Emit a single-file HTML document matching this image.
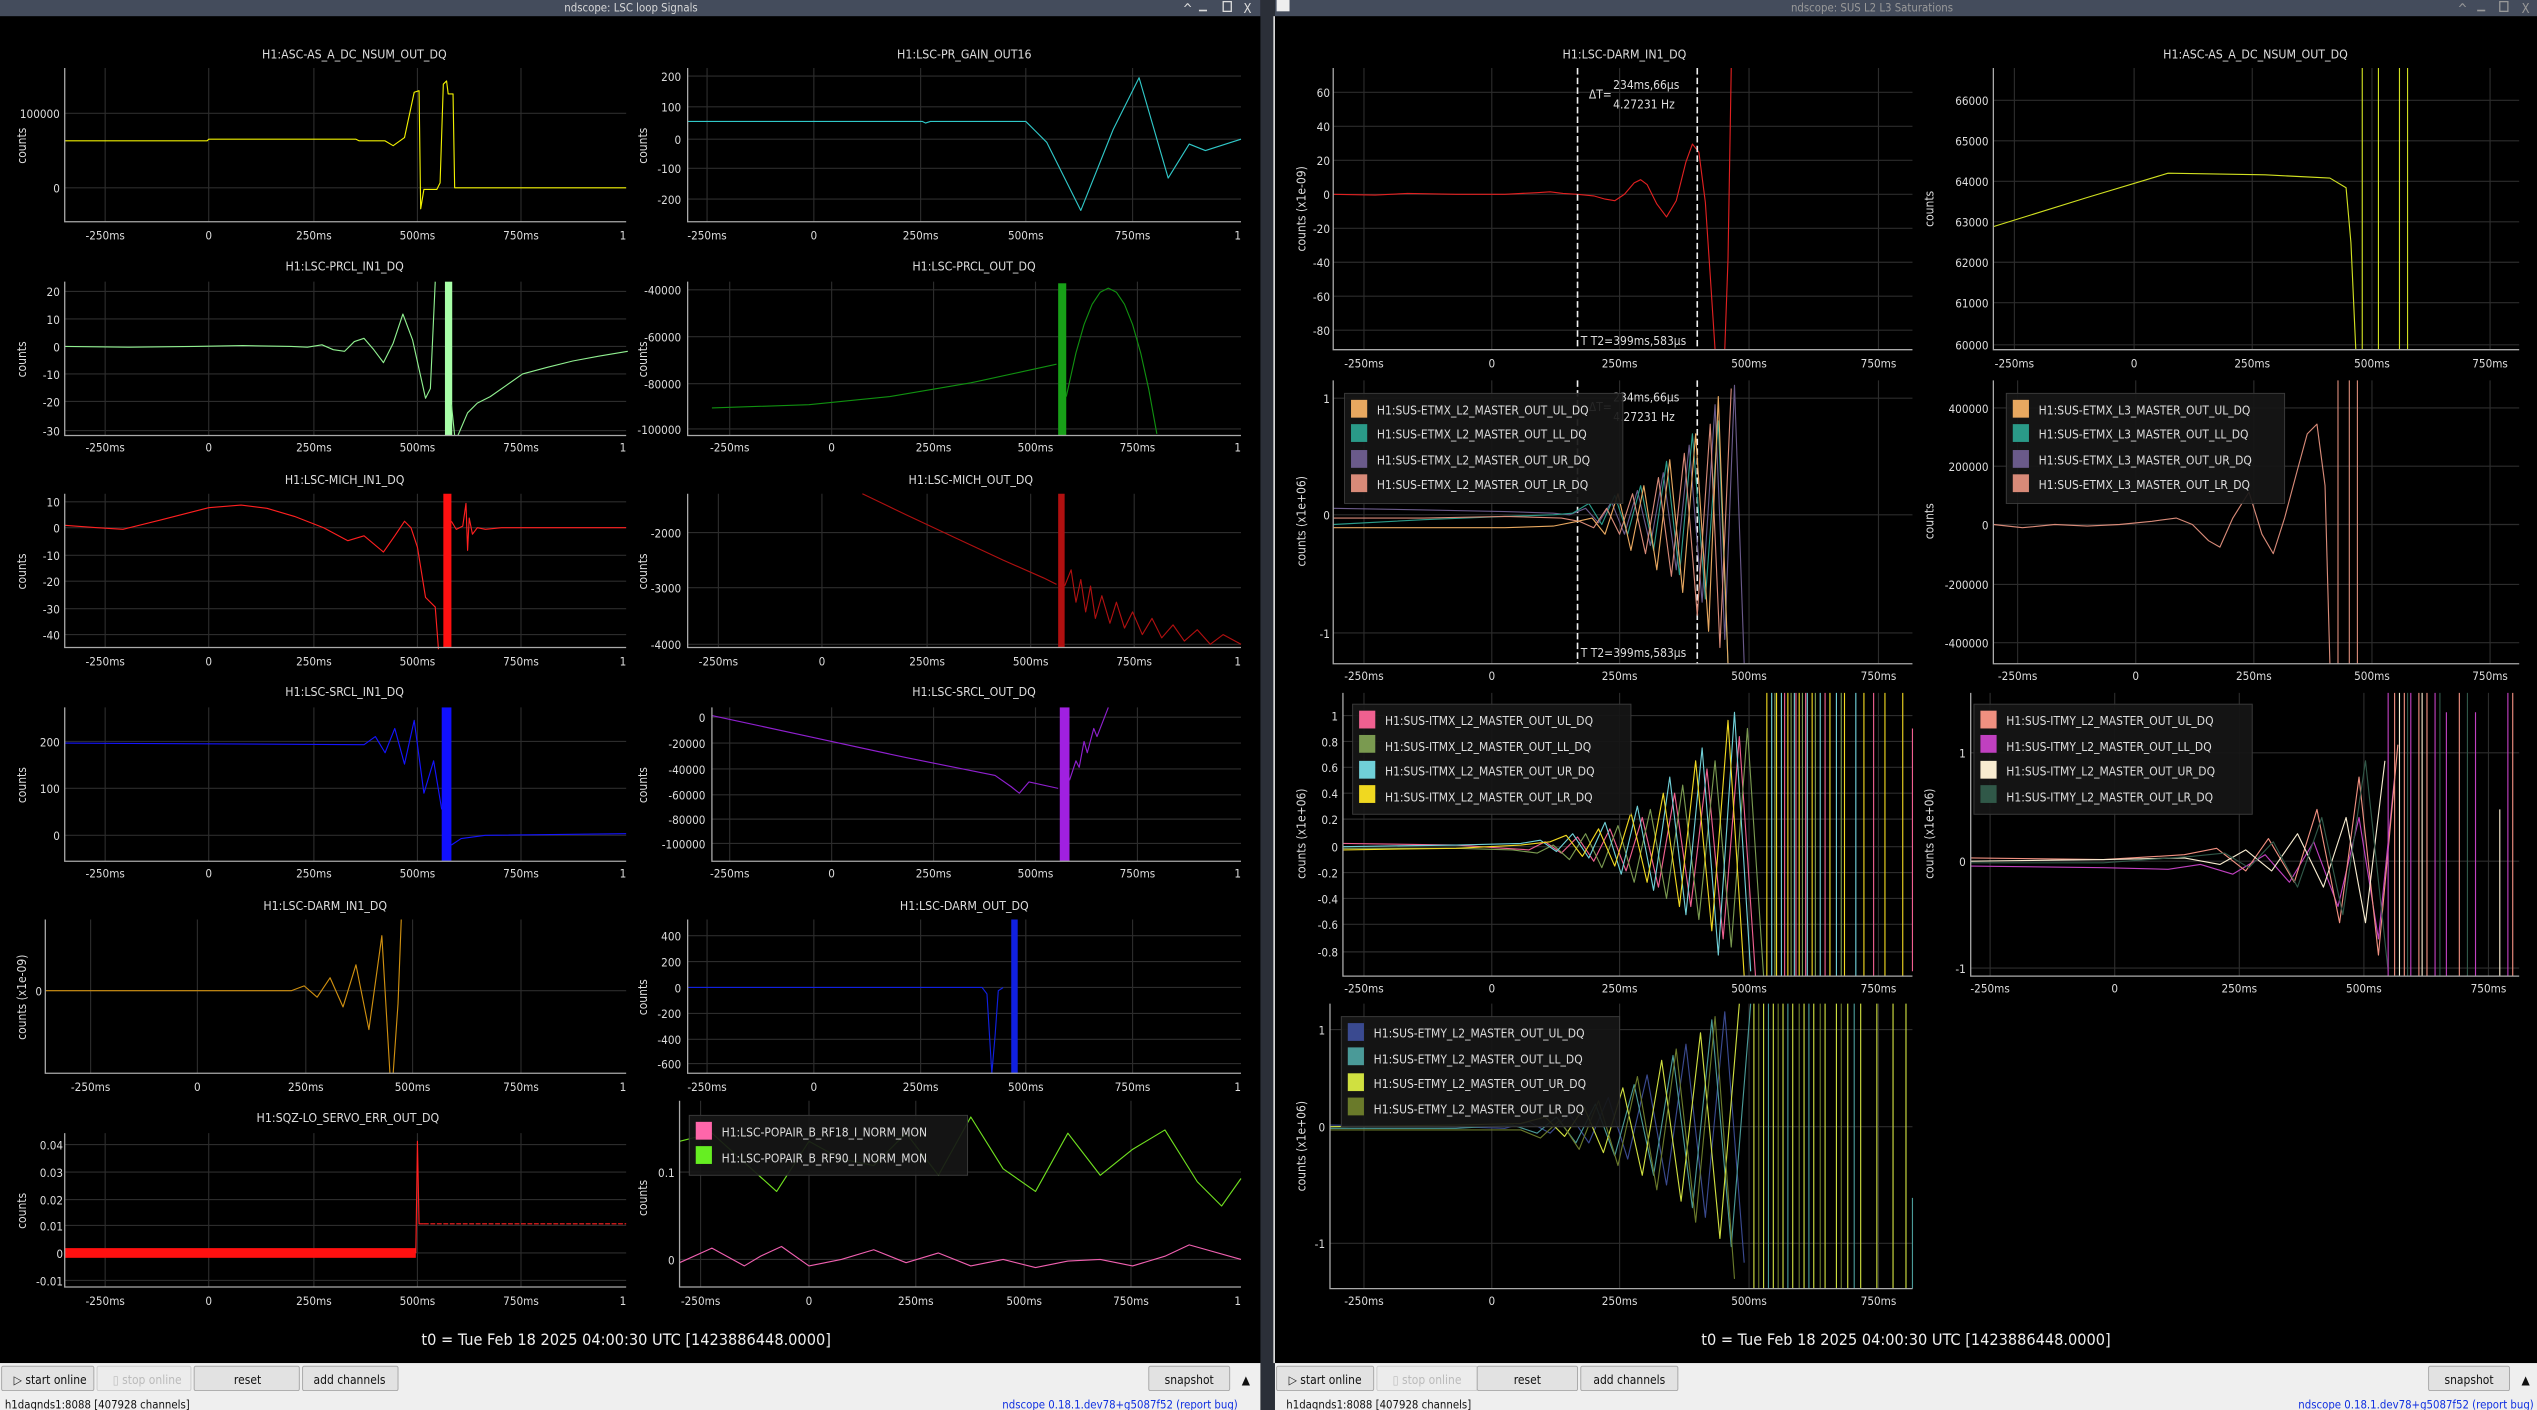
<!DOCTYPE html>
<html><head><meta charset="utf-8"><style>
html,body{margin:0;padding:0;background:#000;overflow:hidden}
svg{display:block}
text{font-family:"DejaVu Sans Condensed","DejaVu Sans","Liberation Sans",sans-serif;fill:#ddd}
.t{font-size:7.6px;text-anchor:middle}
.x{font-size:7.2px;text-anchor:middle}
.y{font-size:7.2px;text-anchor:end}
.l{font-size:7.4px}
.b{font-size:7.4px;text-anchor:middle;fill:#111}
.g{stroke:#2c2c2c;stroke-width:0.7;fill:none}
.a{stroke:#aaa;stroke-width:0.8;fill:none}
.c{fill:none;stroke-width:0.7;stroke-linejoin:round}
</style></head><body>
<svg xmlns="http://www.w3.org/2000/svg" width="2537" height="1410" viewBox="0 0 1568 871" preserveAspectRatio="none">
<rect x="0" y="0" width="1568" height="871" fill="#000"/>

<!-- grids -->
<path class="g" d="M65 42V137M129 42V137M194 42V137M258 42V137M322 42V137M40 70H387M40 116H387"/>
<path class="g" d="M437 42V137M503 42V137M569 42V137M634 42V137M700 42V137M425 47H767M425 66H767M425 86H767M425 104H767M425 123H767"/>
<path class="g" d="M65 174V269M129 174V269M194 174V269M258 174V269M322 174V269M40 180H387M40 197H387M40 214H387M40 231H387M40 248H387M40 266H387"/>
<path class="g" d="M451 174V269M514 174V269M577 174V269M640 174V269M703 174V269M425 179H767M425 208H767M425 237H767M425 265H767"/>
<path class="g" d="M65 305V400M129 305V400M194 305V400M258 305V400M322 305V400M40 310H387M40 326H387M40 343H387M40 359H387M40 376H387M40 392H387"/>
<path class="g" d="M444 305V400M508 305V400M573 305V400M637 305V400M701 305V400M425 329H767M425 363H767M425 398H767"/>
<path class="g" d="M65 437V532M129 437V532M194 437V532M258 437V532M322 437V532M40 458H387M40 487H387M40 516H387"/>
<path class="g" d="M451 437V532M514 437V532M577 437V532M640 437V532M703 437V532M440 443H767M440 459H767M440 475H767M440 491H767M440 506H767M440 521H767"/>
<path class="g" d="M56 568V663M122 568V663M189 568V663M255 568V663M322 568V663M28 612H387"/>
<path class="g" d="M437 568V663M503 568V663M569 568V663M634 568V663M700 568V663M425 578H767M425 594H767M425 610H767M425 626H767M425 642H767M425 657H767"/>
<path class="g" d="M65 700V795M129 700V795M194 700V795M258 700V795M322 700V795M40 707H387M40 724H387M40 741H387M40 757H387M40 774H387M40 791H387"/>
<path class="g" d="M433 680V795M500 680V795M566 680V795M633 680V795M699 680V795M420 724H767M420 778H767"/>
<path class="g" d="M843 42V216M922 42V216M1001 42V216M1081 42V216M1161 42V216M824 57H1182M824 78H1182M824 99H1182M824 120H1182M824 141H1182M824 162H1182M824 183H1182M824 204H1182"/>
<path class="g" d="M1245 42V216M1319 42V216M1392 42V216M1466 42V216M1539 42V216M1232 62H1557M1232 87H1557M1232 112H1557M1232 137H1557M1232 162H1557M1232 187H1557M1232 213H1557"/>
<path class="g" d="M843 235V410M922 235V410M1001 235V410M1081 235V410M1161 235V410M824 246H1182M824 318H1182M824 391H1182"/>
<path class="g" d="M1247 235V410M1320 235V410M1393 235V410M1466 235V410M1539 235V410M1232 252H1557M1232 288H1557M1232 324H1557M1232 361H1557M1232 397H1557"/>
<path class="g" d="M843 428V603M922 428V603M1001 428V603M1081 428V603M1161 428V603M830 442H1182M830 458H1182M830 474H1182M830 490H1182M830 506H1182M830 523H1182M830 539H1182M830 555H1182M830 571H1182M830 588H1182"/>
<path class="g" d="M1230 428V603M1307 428V603M1384 428V603M1461 428V603M1538 428V603M1218 465H1557M1218 532H1557M1218 598H1557"/>
<path class="g" d="M843 620V796M922 620V796M1001 620V796M1081 620V796M1161 620V796M822 636H1182M822 696H1182M822 768H1182"/>

<!-- curves -->
<path class="c" stroke="#f0f000" d="M40 87L128 87L129 86L220 86L222 87L238 87L243 90L250 85L256 57L259 56L260 129L262 117L270 117L272 113L274 52L276 50L277 58L280 58L281 116L387 116"/>
<path class="c" stroke="#30c8c8" d="M425 75L570 75L572 76L575 75L634 75L640 81L647 88L668 130L688 80L704 48L722 110L735 89L745 93L767 86"/>
<path class="c" stroke="#90f090" d="M40 214L80 214.5L120 214L150 213.5L180 214L190 214.5L199 213L206 216L213 217L219 211L225 209L231 216L237 224L243 212L249 194L255 210L263 246L266 240L269 174"/>
<rect x="275" y="174" width="4.5" height="95" fill="#a8ffa8"/>
<path class="c" stroke="#90f090" d="M279 250L281 269M283 269L289 255L295 249L303 245L313 238L323 231L338 227L354 223L370 220L388 217"/>
<path class="c" stroke="#109010" d="M440 252L500 250L550 245L600 236.5L630 230L653 225"/>
<rect x="654" y="175" width="5" height="94" fill="#18a018"/>
<path class="c" stroke="#109010" d="M659 245L660 240.5L665 218L670 200.5L675 188L680 180.5L685 178L690 180.5L695 188L700 200.5L705 218L710 240.5L715 268"/>
<path class="c" stroke="#ff2020" d="M40 324.5L60 326L76 327L100 321L129 313.6L149 312L165 314L182 319L200 326L215 334L225 331L237 341L244 331L250 322L254 326L258 338L263 369L269 375L271 401"/>
<rect x="274" y="305" width="5" height="95" fill="#ff1010"/>
<path class="c" stroke="#ff2020" d="M279 322L282 327L286 325L288 311L289 340L290 320L292 330L295 326L300 327L310 326L387 326"/>
<path class="c" stroke="#b01010" d="M533 305L560 318L590 332L620 346L645 357L653 361"/>
<rect x="654" y="305" width="4" height="95" fill="#b01010"/>
<path class="c" stroke="#b01010" d="M658 362L662 352L665 372L668 358L671 378L674 362L677 382L681 368L686 385L690 372L695 388L700 378L706 392L712 382L718 394L725 386L732 396L740 389L748 398L756 392L767 398"/>
<path class="c" stroke="#1414ff" d="M40 459L225 460L232 455L238 465L244 450L250 472L256 445L262 490L268 470L273 500"/>
<rect x="273" y="437" width="6" height="95" fill="#1010ff"/>
<path class="c" stroke="#1414ff" d="M279 522L285 518L300 516L387 515"/>
<path class="c" stroke="#9020d0" d="M440 442L500 455L560 468L615 479L625 486L630 490L636 483L654 487"/>
<rect x="655" y="437" width="6" height="95" fill="#a020e0"/>
<path class="c" stroke="#9020d0" d="M661 482L665 470L667 474L670 458L672 465L676 450L678 455L685 437"/>
<path class="c" stroke="#d09010" d="M28 612L180 612L188 609L196 616L204 604L212 622L220 596L228 636L236 578L241 663M243 663L246 620L248 568"/>
<path class="c" stroke="#1020e0" d="M425 610L607 610L610 614L613 663L615 640L617 612L620 610"/>
<rect x="625" y="568" width="4" height="95" fill="#1020e0"/>
<rect x="40" y="771" width="217" height="6" fill="#ff1010"/>
<path class="c" stroke="#ff2020" d="M257 774L258 705L259 756L262 756"/>
<path class="c" stroke="#ff2020" stroke-dasharray="3 1" d="M262 756L387 756"/>
<path class="c" stroke="#70e020" d="M420 705L440 700L460 718L480 736L500 705L520 716L540 720L560 700L580 726L600 690L620 722L640 736L660 700L680 726L700 710L720 698L740 730L755 745L767 728"/>
<path class="c" stroke="#f060b0" d="M420 780L440 771L460 782L470 776L483 770L500 782L520 778L540 772L560 780L580 774L600 782L620 778L640 783L660 779L680 778L700 782L720 776L735 769L767 778"/>

<!-- R1 -->
<path class="c" stroke="#e02020" d="M824 120L850 120.5L870 119.5L900 120L930 120L950 119L958 118.5L966 119.5L975 120L985 121L992 123L998 124L1004 120L1010 113L1014 111L1018 114L1024 126L1030 134L1036 124L1042 100L1046 89L1050 94L1054 125L1057 170L1060 216M1066 216L1068 160L1070 42"/>
<path stroke="#eee" stroke-width="1" stroke-dasharray="4 2" fill="none" d="M975 42V216M1049 42V216M975 235V410M1049 235V410"/>
<!-- R2 -->
<path class="c" stroke="#d0e020" d="M1232 140L1290 122L1340 107L1400 108L1440 110L1450 116L1453 150L1456 216M1460 42V216M1470 42V216M1483 42V216M1488 42V216"/>
<!-- R3 -->
<path class="c" stroke="#6a5a8a" d="M824 314L880 315L930 316L960 317L970 318L980 314L988 323L996 310L1004 330L1012 303L1020 337L1028 292L1036 352L1044 275L1052 372L1060 250L1066 395L1072 238L1078 410"/>
<path class="c" stroke="#2a9a88" d="M824 324L880 321L930 319L960 318L972 317L982 311L990 324L998 306L1006 330L1014 300L1022 340L1030 285L1038 355L1046 268L1054 370L1062 260L1068 410"/>
<path class="c" stroke="#d88a78" d="M824 320L880 320L930 319L965 320L976 322L985 326L993 314L1001 330L1009 305L1017 342L1025 295L1033 356L1041 280L1049 380L1057 262L1063 400L1070 240"/>
<path class="c" stroke="#e8a860" d="M824 326L880 326L930 326L960 325L975 322L984 320L992 330L1000 305L1008 340L1016 300L1024 352L1032 284L1040 366L1048 268L1056 390L1062 245L1068 410"/>
<!-- R4 -->
<path class="c" stroke="#d88a78" d="M1232 324L1250 326L1270 324L1290 325L1310 324L1330 322L1345 320L1355 324L1365 334L1372 338L1380 320L1390 304L1398 330L1405 342L1412 320L1420 290L1426 268L1432 262L1437 300L1440 410M1445 235V410M1452 235V410M1457 235V410"/>
<!-- R5 -->
<path class="c" stroke="#f06090" d="M830 521L900 522L930 524L945 525L955 520L965 527L975 517L985 532L995 512L1005 538L1015 505L1025 548L1035 490L1045 560L1055 475L1065 580L1075 455L1085 603"/>
<path class="c" stroke="#7a9a50" d="M830 524L900 524L935 525L950 527L960 522L970 531L980 515L990 536L1000 510L1010 545L1020 500L1030 555L1040 485L1050 568L1060 470L1070 585L1080 450L1090 603"/>
<path class="c" stroke="#70d0d8" d="M830 523L900 522L940 521L952 519L962 526L972 515L982 530L992 508L1002 540L1012 498L1022 550L1032 480L1042 565L1052 462L1062 590L1072 440L1082 600"/>
<path class="c" stroke="#f0d820" d="M830 525L900 524L940 522L958 520L968 516L978 529L988 512L998 535L1008 502L1018 545L1028 490L1038 560L1048 470L1058 575L1068 445L1078 603"/>
<path class="c" stroke="#f0d820" d="M1092 428V603M1098 428V603M1105 428V603M1112 428V603M1120 428V603M1131 428V603M1140 428V603M1152 428V603M1165 428V603M1176 428V603"/>
<path class="c" stroke="#70d0d8" d="M1095 428V603M1101 428V603M1109 428V603M1117 428V603M1125 428V603M1135 428V603M1147 428V603"/>
<path class="c" stroke="#f06090" d="M1103 428V603M1110 428V603M1116 428V603M1128 428V603M1158 428V603M1182 450V600"/>
<path class="c" stroke="#7a9a50" d="M1097 428V603M1107 428V603M1114 428V603M1122 428V603M1138 428V603"/>
<!-- R6 -->
<path class="c" stroke="#c040c0" d="M1218 535L1300 536L1340 537L1360 534L1380 540L1400 528L1415 545L1430 520L1445 560L1458 505L1470 580L1480 480"/>
<path class="c" stroke="#f09080" d="M1218 530L1300 531L1350 528L1370 524L1388 538L1402 518L1418 545L1432 500L1446 570L1458 480L1470 590L1482 460"/>
<path class="c" stroke="#f8ecd0" d="M1218 532L1300 531L1350 530L1372 534L1388 525L1404 538L1420 515L1436 548L1450 505L1462 570L1474 470"/>
<path class="c" stroke="#305848" d="M1218 533L1300 533L1355 529L1375 527L1390 536L1405 520L1420 548L1435 505L1448 565L1462 470L1476 600"/>
<path class="c" stroke="#c040c0" d="M1476 428V603M1490 428V603M1505 428V603M1512 440V603M1530 440V603M1550 428V603"/>
<path class="c" stroke="#f09080" d="M1480 428V603M1486 428V603M1495 428V603M1500 428V603M1520 428V603M1553 428V603"/>
<path class="c" stroke="#f8ecd0" d="M1483 428V603M1497 428V603M1545 500V603"/>
<path class="c" stroke="#305848" d="M1488 428V603M1508 428V603M1525 428V603"/>
<!-- R7 -->
<path class="c" stroke="#3a4a90" d="M822 695L900 696L930 697L945 693L958 700L970 688L982 706L994 678L1006 716L1018 664L1030 732L1042 645L1054 752L1066 625L1078 780"/>
<path class="c" stroke="#4a9a98" d="M822 697L900 697L935 695L950 700L962 690L974 706L986 682L998 714L1010 670L1022 726L1034 652L1046 746L1058 630L1070 770L1082 620"/>
<path class="c" stroke="#d0e040" d="M822 696L900 695L940 694L955 690L967 702L979 684L991 712L1003 672L1015 726L1027 655L1039 742L1051 638L1063 765L1075 620"/>
<path class="c" stroke="#6a7a2a" d="M822 698L900 698L940 698L952 703L964 692L976 710L988 680L1000 720L1012 665L1024 735L1036 648L1048 755L1060 628L1072 790"/>
<path class="c" stroke="#d0e040" d="M1084 620V796M1090 620V796M1096 620V796M1102 620V796M1108 620V796M1115 620V796M1121 620V796M1128 620V796M1135 620V796M1142 620V796M1150 620V796M1160 620V796M1170 620V796M1178 620V796"/>
<path class="c" stroke="#6a7a2a" d="M1087 620V796M1099 620V796M1112 620V796M1125 620V796M1138 620V796"/>
<path class="c" stroke="#4a9a98" d="M1093 620V796M1105 620V796M1118 620V796M1146 620V796M1182 740V796"/>

<!-- axes -->
<path class="a" d="M40 42V137H387M425 42V137H767M40 174V269H387M425 174V269H767M40 305V400H387M425 305V400H767M40 437V532H387M440 437V532H767M28 568V663H387M425 568V663H767M40 700V795H387M420 680V795H767M824 42V216H1182M1232 42V216H1557M824 235V410H1182M1232 235V410H1557M830 428V603H1182M1218 428V603H1557M822 620V796H1182"/>

<!-- title bars -->
<rect x="0" y="0" width="779" height="10" fill="#444c5c"/>
<rect x="788" y="0" width="780" height="10" fill="#444c5c"/>
<rect x="779" y="0" width="9" height="871" fill="#2b2f38"/>
<rect x="787" y="10" width="1" height="832" fill="#ddd"/>
<text x="390" y="7" class="t" style="font-size:7px;fill:#d8d8d8">ndscope: LSC loop Signals</text>
<text x="1157" y="7" class="t" style="font-size:7px;fill:#999">ndscope: SUS L2 L3 Saturations</text>
<text x="734" y="8" class="t" style="font-size:8px;fill:#ddd">^</text>
<rect x="741" y="6" width="5" height="1" fill="#ddd"/>
<rect x="756" y="1" width="5" height="6" fill="none" stroke="#ddd" stroke-width="0.8"/>
<text x="771" y="8" class="t" style="font-size:8px;fill:#ddd">X</text>
<text x="1522" y="8" class="t" style="font-size:8px;fill:#999">^</text>
<rect x="1531" y="6" width="5" height="1" fill="#999"/>
<rect x="1545" y="1" width="5" height="6" fill="none" stroke="#999" stroke-width="0.8"/>
<text x="1561" y="8" class="t" style="font-size:8px;fill:#999">X</text>
<rect x="789" y="0" width="8" height="7" fill="#eee"/>

<!-- titles -->
<text x="219" y="36" class="t">H1:ASC-AS_A_DC_NSUM_OUT_DQ</text>
<text x="596" y="36" class="t">H1:LSC-PR_GAIN_OUT16</text>
<text x="213" y="167" class="t">H1:LSC-PRCL_IN1_DQ</text>
<text x="602" y="167" class="t">H1:LSC-PRCL_OUT_DQ</text>
<text x="213" y="299" class="t">H1:LSC-MICH_IN1_DQ</text>
<text x="600" y="299" class="t">H1:LSC-MICH_OUT_DQ</text>
<text x="213" y="430" class="t">H1:LSC-SRCL_IN1_DQ</text>
<text x="602" y="430" class="t">H1:LSC-SRCL_OUT_DQ</text>
<text x="201" y="562" class="t">H1:LSC-DARM_IN1_DQ</text>
<text x="596" y="562" class="t">H1:LSC-DARM_OUT_DQ</text>
<text x="215" y="693" class="t">H1:SQZ-LO_SERVO_ERR_OUT_DQ</text>
<text x="1004" y="36" class="t">H1:LSC-DARM_IN1_DQ</text>
<text x="1394" y="36" class="t">H1:ASC-AS_A_DC_NSUM_OUT_DQ</text>

<g style="font-size:7.4px;text-anchor:middle">
<text transform="translate(16,90) rotate(-90)">counts</text>
<text transform="translate(400,90) rotate(-90)">counts</text>
<text transform="translate(16,222) rotate(-90)">counts</text>
<text transform="translate(400,222) rotate(-90)">counts</text>
<text transform="translate(16,353) rotate(-90)">counts</text>
<text transform="translate(400,353) rotate(-90)">counts</text>
<text transform="translate(16,485) rotate(-90)">counts</text>
<text transform="translate(400,485) rotate(-90)">counts</text>
<text transform="translate(16,616) rotate(-90)">counts (x1e-09)</text>
<text transform="translate(400,616) rotate(-90)">counts</text>
<text transform="translate(16,748) rotate(-90)">counts</text>
<text transform="translate(400,740) rotate(-90)">counts</text>
<text transform="translate(807,129) rotate(-90)">counts (x1e-09)</text>
<text transform="translate(1195,129) rotate(-90)">counts</text>
<text transform="translate(807,322) rotate(-90)">counts (x1e+06)</text>
<text transform="translate(1195,322) rotate(-90)">counts</text>
<text transform="translate(807,515) rotate(-90)">counts (x1e+06)</text>
<text transform="translate(1195,515) rotate(-90)">counts (x1e+06)</text>
<text transform="translate(807,708) rotate(-90)">counts (x1e+06)</text>
</g>

<g>
<text x="37" y="73" class="y">100000</text><text x="37" y="119" class="y">0</text>
<text x="421" y="50" class="y">200</text><text x="421" y="69" class="y">100</text><text x="421" y="89" class="y">0</text><text x="421" y="107" class="y">-100</text><text x="421" y="126" class="y">-200</text>
<text x="37" y="183" class="y">20</text><text x="37" y="200" class="y">10</text><text x="37" y="217" class="y">0</text><text x="37" y="234" class="y">-10</text><text x="37" y="251" class="y">-20</text><text x="37" y="269" class="y">-30</text>
<text x="421" y="182" class="y">-40000</text><text x="421" y="211" class="y">-60000</text><text x="421" y="240" class="y">-80000</text><text x="421" y="268" class="y">-100000</text>
<text x="37" y="313" class="y">10</text><text x="37" y="329" class="y">0</text><text x="37" y="346" class="y">-10</text><text x="37" y="362" class="y">-20</text><text x="37" y="379" class="y">-30</text><text x="37" y="395" class="y">-40</text>
<text x="421" y="332" class="y">-2000</text><text x="421" y="366" class="y">-3000</text><text x="421" y="401" class="y">-4000</text>
<text x="37" y="461" class="y">200</text><text x="37" y="490" class="y">100</text><text x="37" y="519" class="y">0</text>
<text x="436" y="446" class="y">0</text><text x="436" y="462" class="y">-20000</text><text x="436" y="478" class="y">-40000</text><text x="436" y="494" class="y">-60000</text><text x="436" y="509" class="y">-80000</text><text x="436" y="524" class="y">-100000</text>
<text x="26" y="615" class="y">0</text>
<text x="421" y="581" class="y">400</text><text x="421" y="597" class="y">200</text><text x="421" y="613" class="y">0</text><text x="421" y="629" class="y">-200</text><text x="421" y="645" class="y">-400</text><text x="421" y="660" class="y">-600</text>
<text x="39" y="710" class="y">0.04</text><text x="39" y="727" class="y">0.03</text><text x="39" y="744" class="y">0.02</text><text x="39" y="760" class="y">0.01</text><text x="39" y="777" class="y">0</text><text x="39" y="794" class="y">-0.01</text>
<text x="417" y="727" class="y">0.1</text><text x="417" y="781" class="y">0</text>
<text x="822" y="60" class="y">60</text><text x="822" y="81" class="y">40</text><text x="822" y="102" class="y">20</text><text x="822" y="123" class="y">0</text><text x="822" y="144" class="y">-20</text><text x="822" y="165" class="y">-40</text><text x="822" y="186" class="y">-60</text><text x="822" y="207" class="y">-80</text>
<text x="1229" y="65" class="y">66000</text><text x="1229" y="90" class="y">65000</text><text x="1229" y="115" class="y">64000</text><text x="1229" y="140" class="y">63000</text><text x="1229" y="165" class="y">62000</text><text x="1229" y="190" class="y">61000</text><text x="1229" y="216" class="y">60000</text>
<text x="822" y="249" class="y">1</text><text x="822" y="321" class="y">0</text><text x="822" y="394" class="y">-1</text>
<text x="1229" y="255" class="y">400000</text><text x="1229" y="291" class="y">200000</text><text x="1229" y="327" class="y">0</text><text x="1229" y="364" class="y">-200000</text><text x="1229" y="400" class="y">-400000</text>
<text x="827" y="445" class="y">1</text><text x="827" y="461" class="y">0.8</text><text x="827" y="477" class="y">0.6</text><text x="827" y="493" class="y">0.4</text><text x="827" y="509" class="y">0.2</text><text x="827" y="526" class="y">0</text><text x="827" y="542" class="y">-0.2</text><text x="827" y="558" class="y">-0.4</text><text x="827" y="574" class="y">-0.6</text><text x="827" y="591" class="y">-0.8</text>
<text x="1215" y="468" class="y">1</text><text x="1215" y="535" class="y">0</text><text x="1215" y="601" class="y">-1</text>
<text x="819" y="639" class="y">1</text><text x="819" y="699" class="y">0</text><text x="819" y="771" class="y">-1</text>
</g>

<g>
<text x="65" y="148" class="x">-250ms</text><text x="129" y="148" class="x">0</text><text x="194" y="148" class="x">250ms</text><text x="258" y="148" class="x">500ms</text><text x="322" y="148" class="x">750ms</text><text x="385" y="148" class="x">1</text>
<text x="437" y="148" class="x">-250ms</text><text x="503" y="148" class="x">0</text><text x="569" y="148" class="x">250ms</text><text x="634" y="148" class="x">500ms</text><text x="700" y="148" class="x">750ms</text><text x="765" y="148" class="x">1</text>
<text x="65" y="279" class="x">-250ms</text><text x="129" y="279" class="x">0</text><text x="194" y="279" class="x">250ms</text><text x="258" y="279" class="x">500ms</text><text x="322" y="279" class="x">750ms</text><text x="385" y="279" class="x">1</text>
<text x="451" y="279" class="x">-250ms</text><text x="514" y="279" class="x">0</text><text x="577" y="279" class="x">250ms</text><text x="640" y="279" class="x">500ms</text><text x="703" y="279" class="x">750ms</text><text x="765" y="279" class="x">1</text>
<text x="65" y="411" class="x">-250ms</text><text x="129" y="411" class="x">0</text><text x="194" y="411" class="x">250ms</text><text x="258" y="411" class="x">500ms</text><text x="322" y="411" class="x">750ms</text><text x="385" y="411" class="x">1</text>
<text x="444" y="411" class="x">-250ms</text><text x="508" y="411" class="x">0</text><text x="573" y="411" class="x">250ms</text><text x="637" y="411" class="x">500ms</text><text x="701" y="411" class="x">750ms</text><text x="765" y="411" class="x">1</text>
<text x="65" y="542" class="x">-250ms</text><text x="129" y="542" class="x">0</text><text x="194" y="542" class="x">250ms</text><text x="258" y="542" class="x">500ms</text><text x="322" y="542" class="x">750ms</text><text x="385" y="542" class="x">1</text>
<text x="451" y="542" class="x">-250ms</text><text x="514" y="542" class="x">0</text><text x="577" y="542" class="x">250ms</text><text x="640" y="542" class="x">500ms</text><text x="703" y="542" class="x">750ms</text><text x="765" y="542" class="x">1</text>
<text x="56" y="674" class="x">-250ms</text><text x="122" y="674" class="x">0</text><text x="189" y="674" class="x">250ms</text><text x="255" y="674" class="x">500ms</text><text x="322" y="674" class="x">750ms</text><text x="385" y="674" class="x">1</text>
<text x="437" y="674" class="x">-250ms</text><text x="503" y="674" class="x">0</text><text x="569" y="674" class="x">250ms</text><text x="634" y="674" class="x">500ms</text><text x="700" y="674" class="x">750ms</text><text x="765" y="674" class="x">1</text>
<text x="65" y="806" class="x">-250ms</text><text x="129" y="806" class="x">0</text><text x="194" y="806" class="x">250ms</text><text x="258" y="806" class="x">500ms</text><text x="322" y="806" class="x">750ms</text><text x="385" y="806" class="x">1</text>
<text x="433" y="806" class="x">-250ms</text><text x="500" y="806" class="x">0</text><text x="566" y="806" class="x">250ms</text><text x="633" y="806" class="x">500ms</text><text x="699" y="806" class="x">750ms</text><text x="765" y="806" class="x">1</text>
<text x="843" y="227" class="x">-250ms</text><text x="922" y="227" class="x">0</text><text x="1001" y="227" class="x">250ms</text><text x="1081" y="227" class="x">500ms</text><text x="1161" y="227" class="x">750ms</text>
<text x="1245" y="227" class="x">-250ms</text><text x="1319" y="227" class="x">0</text><text x="1392" y="227" class="x">250ms</text><text x="1466" y="227" class="x">500ms</text><text x="1539" y="227" class="x">750ms</text>
<text x="843" y="420" class="x">-250ms</text><text x="922" y="420" class="x">0</text><text x="1001" y="420" class="x">250ms</text><text x="1081" y="420" class="x">500ms</text><text x="1161" y="420" class="x">750ms</text>
<text x="1247" y="420" class="x">-250ms</text><text x="1320" y="420" class="x">0</text><text x="1393" y="420" class="x">250ms</text><text x="1466" y="420" class="x">500ms</text><text x="1539" y="420" class="x">750ms</text>
<text x="843" y="613" class="x">-250ms</text><text x="922" y="613" class="x">0</text><text x="1001" y="613" class="x">250ms</text><text x="1081" y="613" class="x">500ms</text><text x="1161" y="613" class="x">750ms</text>
<text x="1230" y="613" class="x">-250ms</text><text x="1307" y="613" class="x">0</text><text x="1384" y="613" class="x">250ms</text><text x="1461" y="613" class="x">500ms</text><text x="1538" y="613" class="x">750ms</text>
<text x="843" y="806" class="x">-250ms</text><text x="922" y="806" class="x">0</text><text x="1001" y="806" class="x">250ms</text><text x="1081" y="806" class="x">500ms</text><text x="1161" y="806" class="x">750ms</text>
</g>

<g class="l">
<text x="982" y="61">ΔT=</text><text x="997" y="55">234ms,66µs</text><text x="997" y="67">4.27231 Hz</text>
<text x="977" y="213">T T2=399ms,583µs</text>
<text x="982" y="254">ΔT=</text><text x="997" y="248">234ms,66µs</text><text x="997" y="260">4.27231 Hz</text>
<text x="977" y="406">T T2=399ms,583µs</text>
</g>

<!-- legend boxes -->
<g stroke="#3a3a3a" stroke-width="0.6" fill="#161616" fill-opacity="0.92">
<rect x="426" y="689" width="172" height="37"/>
<rect x="831" y="243" width="172" height="68"/>
<rect x="1240" y="243" width="172" height="68"/>
<rect x="836" y="435" width="172" height="68"/>
<rect x="1220" y="435" width="172" height="68"/>
<rect x="829" y="628" width="172" height="68"/>
</g>
<g>
<rect x="430" y="693" width="10" height="11" fill="#ff66aa"/><rect x="430" y="708" width="10" height="11" fill="#66ee22"/>
<rect x="835" y="247" width="10" height="11" fill="#e8a860"/><rect x="835" y="262" width="10" height="11" fill="#2a9a88"/><rect x="835" y="278" width="10" height="11" fill="#6a5a8a"/><rect x="835" y="293" width="10" height="11" fill="#d88a78"/>
<rect x="1244" y="247" width="10" height="11" fill="#e8a860"/><rect x="1244" y="262" width="10" height="11" fill="#2a9a88"/><rect x="1244" y="278" width="10" height="11" fill="#6a5a8a"/><rect x="1244" y="293" width="10" height="11" fill="#d88a78"/>
<rect x="840" y="439" width="10" height="11" fill="#f06090"/><rect x="840" y="454" width="10" height="11" fill="#7a9a50"/><rect x="840" y="470" width="10" height="11" fill="#70d0d8"/><rect x="840" y="485" width="10" height="11" fill="#f0d820"/>
<rect x="1224" y="439" width="10" height="11" fill="#f09080"/><rect x="1224" y="454" width="10" height="11" fill="#c040c0"/><rect x="1224" y="470" width="10" height="11" fill="#f8ecd0"/><rect x="1224" y="485" width="10" height="11" fill="#305848"/>
<rect x="833" y="632" width="10" height="11" fill="#3a4a90"/><rect x="833" y="647" width="10" height="11" fill="#4a9a98"/><rect x="833" y="663" width="10" height="11" fill="#d0e040"/><rect x="833" y="678" width="10" height="11" fill="#6a7a2a"/>
</g>
<g class="l">
<text x="446" y="702">H1:LSC-POPAIR_B_RF18_I_NORM_MON</text>
<text x="446" y="718">H1:LSC-POPAIR_B_RF90_I_NORM_MON</text>
<text x="851" y="256">H1:SUS-ETMX_L2_MASTER_OUT_UL_DQ</text>
<text x="851" y="271">H1:SUS-ETMX_L2_MASTER_OUT_LL_DQ</text>
<text x="851" y="287">H1:SUS-ETMX_L2_MASTER_OUT_UR_DQ</text>
<text x="851" y="302">H1:SUS-ETMX_L2_MASTER_OUT_LR_DQ</text>
<text x="1260" y="256">H1:SUS-ETMX_L3_MASTER_OUT_UL_DQ</text>
<text x="1260" y="271">H1:SUS-ETMX_L3_MASTER_OUT_LL_DQ</text>
<text x="1260" y="287">H1:SUS-ETMX_L3_MASTER_OUT_UR_DQ</text>
<text x="1260" y="302">H1:SUS-ETMX_L3_MASTER_OUT_LR_DQ</text>
<text x="856" y="448">H1:SUS-ITMX_L2_MASTER_OUT_UL_DQ</text>
<text x="856" y="464">H1:SUS-ITMX_L2_MASTER_OUT_LL_DQ</text>
<text x="856" y="479">H1:SUS-ITMX_L2_MASTER_OUT_UR_DQ</text>
<text x="856" y="495">H1:SUS-ITMX_L2_MASTER_OUT_LR_DQ</text>
<text x="1240" y="448">H1:SUS-ITMY_L2_MASTER_OUT_UL_DQ</text>
<text x="1240" y="464">H1:SUS-ITMY_L2_MASTER_OUT_LL_DQ</text>
<text x="1240" y="479">H1:SUS-ITMY_L2_MASTER_OUT_UR_DQ</text>
<text x="1240" y="495">H1:SUS-ITMY_L2_MASTER_OUT_LR_DQ</text>
<text x="849" y="641">H1:SUS-ETMY_L2_MASTER_OUT_UL_DQ</text>
<text x="849" y="657">H1:SUS-ETMY_L2_MASTER_OUT_LL_DQ</text>
<text x="849" y="672">H1:SUS-ETMY_L2_MASTER_OUT_UR_DQ</text>
<text x="849" y="688">H1:SUS-ETMY_L2_MASTER_OUT_LR_DQ</text>
</g>

<text x="387" y="831" class="t" style="font-size:10px;fill:#eee">t0 = Tue Feb 18 2025 04:00:30 UTC [1423886448.0000]</text>
<text x="1178" y="831" class="t" style="font-size:10px;fill:#eee">t0 = Tue Feb 18 2025 04:00:30 UTC [1423886448.0000]</text>

<!-- toolbars -->
<rect x="0" y="842" width="779" height="29" fill="#efefef"/>
<rect x="788" y="842" width="780" height="29" fill="#efefef"/>
<g fill="#e2e2e2" stroke="#a8a8a8" stroke-width="0.6">
<rect x="1" y="844" width="57" height="15" rx="1"/><rect x="60" y="844" width="58" height="15" rx="1" fill="#ececec" stroke="#ccc"/>
<rect x="120" y="844" width="65" height="15" rx="1"/><rect x="187" y="844" width="59" height="15" rx="1"/>
<rect x="710" y="844" width="50" height="15" rx="1"/>
<rect x="789" y="844" width="60" height="15" rx="1"/><rect x="851" y="844" width="62" height="15" rx="1" fill="#ececec" stroke="#ccc"/>
<rect x="913" y="844" width="62" height="15" rx="1"/><rect x="977" y="844" width="60" height="15" rx="1"/>
<rect x="1501" y="844" width="50" height="15" rx="1"/>
</g>
<g>
<text x="31" y="855" class="b">▷ start online</text><text x="91" y="855" class="b" style="fill:#bbb">▯ stop online</text>
<text x="153" y="855" class="b">reset</text><text x="216" y="855" class="b">add channels</text>
<text x="735" y="855" class="b">snapshot</text><text x="770" y="855" class="b">▲</text>
<text x="3" y="870" style="font-size:7px;fill:#111">h1daqnds1:8088  [407928 channels]</text>
<text x="765" y="870" style="font-size:7px;fill:#1030e0;text-anchor:end">ndscope 0.18.1.dev78+g5087f52 (report bug)</text>
<text x="819" y="855" class="b">▷ start online</text><text x="882" y="855" class="b" style="fill:#bbb">▯ stop online</text>
<text x="944" y="855" class="b">reset</text><text x="1007" y="855" class="b">add channels</text>
<text x="1526" y="855" class="b">snapshot</text><text x="1561" y="855" class="b">▲</text>
<text x="795" y="870" style="font-size:7px;fill:#111">h1daqnds1:8088  [407928 channels]</text>
<text x="1566" y="870" style="font-size:7px;fill:#1030e0;text-anchor:end">ndscope 0.18.1.dev78+g5087f52 (report bug)</text>
</g>
</svg>
</body></html>
